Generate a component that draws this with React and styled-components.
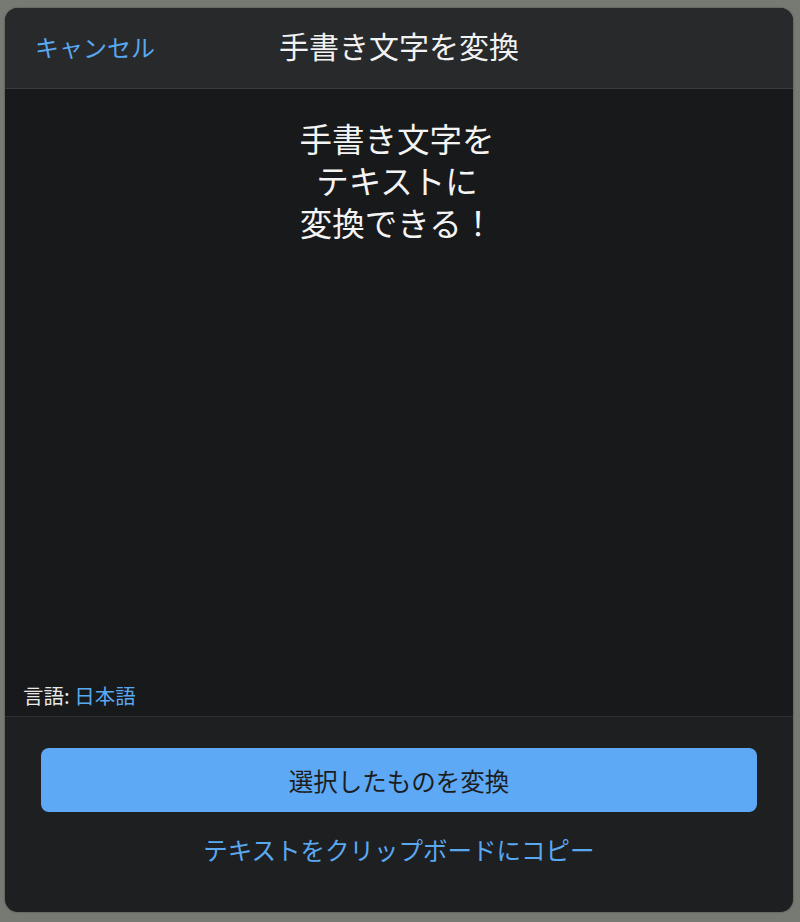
import React from "react";
import styled, { createGlobalStyle } from "styled-components";

const Global = createGlobalStyle`
  html, body { margin: 0; padding: 0; background: #777a73; }
  body { font-family: "Noto Sans CJK JP", "Noto Sans", sans-serif; }
  * { box-sizing: border-box; }
`;

const Backdrop = styled.div`
  width: 800px;
  height: 922px;
  padding: 8px 7px 10px 5px;
  display: flex;
`;

const Sheet = styled.div`
  flex: 1;
  display: flex;
  flex-direction: column;
  border-radius: 13px;
  overflow: hidden;
  background: #1e1f21;
  box-shadow: 0 0 2px rgba(0, 0, 0, 0.5);
`;

const Header = styled.div`
  height: 81px;
  flex: none;
  display: grid;
  grid-template-columns: 1fr auto 1fr;
  align-items: center;
  padding: 0 30px 4px;
  background: #28292b;
  border-bottom: 1px solid #3a3b3d;
`;

const Cancel = styled.button`
  justify-self: start;
  background: none;
  border: 0;
  padding: 0;
  font-family: inherit;
  font-size: 24px;
  color: #5aa8f0;
`;

const Title = styled.h1`
  margin: -2px 0 0;
  font-size: 30px;
  font-weight: 400;
  color: #f2f2f2;
`;

const Canvas = styled.div`
  flex: 1;
  display: flex;
  flex-direction: column;
  justify-content: space-between;
  background: #18191b;
  padding: 28px 18px 6px;
  border-bottom: 1px solid #303133;
`;

const Handwriting = styled.p`
  margin: 0;
  text-align: center;
  color: #f4f4f4;
  font-size: 32.5px;
  line-height: 42px;
  padding-right: 4px;
`;

const Lang = styled.div`
  font-size: 20.5px;
  color: #e8e8e8;
`;

const LangValue = styled.span`
  color: #5aa8f0;
`;

const Footer = styled.div`
  height: 195px;
  flex: none;
  display: flex;
  flex-direction: column;
  align-items: center;
  padding: 31px 36px 0;
  gap: 20px;
`;

const Primary = styled.button`
  width: 716px;
  height: 64px;
  flex: none;
  border: 0;
  border-radius: 8px;
  background: #5ea9f5;
  color: #1c1d1f;
  font-family: inherit;
  font-size: 24.5px;
`;

const LinkButton = styled.button`
  background: none;
  border: 0;
  padding: 0;
  font-family: inherit;
  font-size: 24.5px;
  color: #5aa8f0;
`;

export default function App() {
  return (
    <>
      <Global />
      <Backdrop>
        <Sheet>
          <Header>
            <Cancel>キャンセル</Cancel>
            <Title>手書き文字を変換</Title>
            <span />
          </Header>
          <Canvas>
            <Handwriting>
              手書き文字を
              <br />
              テキストに
              <br />
              変換できる！
            </Handwriting>
            <Lang>
              言語: <LangValue>日本語</LangValue>
            </Lang>
          </Canvas>
          <Footer>
            <Primary>選択したものを変換</Primary>
            <LinkButton>テキストをクリップボードにコピー</LinkButton>
          </Footer>
        </Sheet>
      </Backdrop>
    </>
  );
}
